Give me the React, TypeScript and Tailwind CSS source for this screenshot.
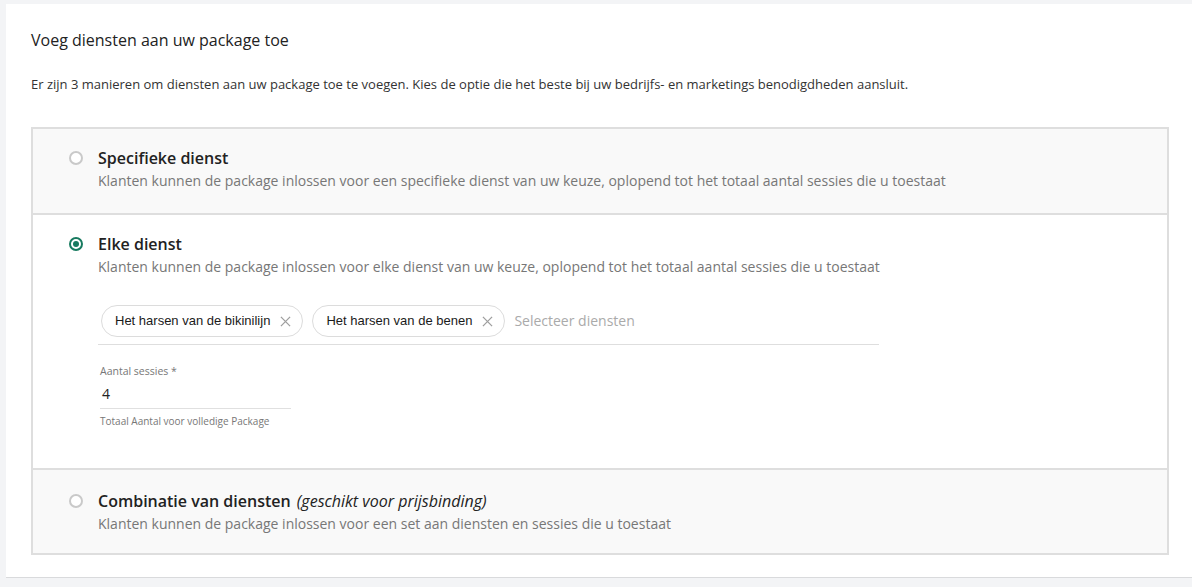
import React from "react";

const font = { fontFamily: '"Open Sans", "Noto Sans", sans-serif' };

function Radio({ checked }: { checked?: boolean }) {
  if (checked) {
    return (
      <span className="flex h-[14px] w-[14px] items-center justify-center rounded-full border-2 border-[#177a5f]">
        <span className="h-[6px] w-[6px] rounded-full bg-[#177a5f]" />
      </span>
    );
  }
  return <span className="block h-[14px] w-[14px] rounded-full border-2 border-[#c9c9c9] bg-white" />;
}

function XIcon() {
  return (
    <svg width="11" height="11" viewBox="0 0 12 12" className="ml-[10px]">
      <path d="M1 1 L11 11 M11 1 L1 11" stroke="#9e9e9e" strokeWidth="1.4" fill="none" />
    </svg>
  );
}

function Chip({ label }: { label: string }) {
  return (
    <div className="flex h-[32px] items-center rounded-full border border-[#dcdcdc] bg-white pl-[13px] pr-[11px]">
      <span className="text-[13px] text-[#1a1a1a]" style={{ fontFamily: '"Liberation Sans", Arial, sans-serif' }}>
        {label}
      </span>
      <XIcon />
    </div>
  );
}

export default function App() {
  return (
    <div className="min-h-[587px] w-[1192px] bg-[#f3f4f6] pl-[6px] pt-[4px]" style={font}>
      <div className="h-[574px] w-full border-b border-[#d9dadc] bg-white pl-[25px] pr-[23px] pt-[25px]">
        <h2 className="text-[16px] leading-[22px] text-[#222]">Voeg diensten aan uw package toe</h2>
        <p className="mt-[24px] text-[13px] leading-[18px] text-[#333]">
          Er zijn 3 manieren om diensten aan uw package toe te voegen. Kies de optie die het beste bij uw bedrijfs- en marketings benodigdheden aansluit.
        </p>
        <div className="mt-[34px] flex flex-col">
          {/* Option 1 */}
          <div className="flex h-[86px] border-l-2 border-r-2 border-t-2 border-[#dedede] bg-[#f9f9f9] pl-[36px] pt-[18px]">
            <div className="pt-[4px]">
              <Radio />
            </div>
            <div className="ml-[15px]">
              <div className="text-[16px] font-semibold leading-[22px] text-[#222]">Specifieke dienst</div>
              <div className="mt-[2px] text-[14px] leading-[20px] text-[#777]">
                Klanten kunnen de package inlossen voor een specifieke dienst van uw keuze, oplopend tot het totaal aantal sessies die u toestaat
              </div>
            </div>
          </div>
          {/* Option 2 */}
          <div className="flex h-[257px] border-2 border-[#dedede] bg-white pl-[36px] pt-[18px]">
            <div className="pt-[4px]">
              <Radio checked />
            </div>
            <div className="ml-[15px] flex flex-col">
              <div className="text-[16px] font-semibold leading-[22px] text-[#222]">Elke dienst</div>
              <div className="mt-[2px] text-[14px] leading-[20px] text-[#777]">
                Klanten kunnen de package inlossen voor elke dienst van uw keuze, oplopend tot het totaal aantal sessies die u toestaat
              </div>
              <div className="mt-[28px] flex h-[40px] w-[781px] items-start gap-[9px] border-b border-[#dedede] pl-[3px]">
                <Chip label="Het harsen van de bikinilijn" />
                <Chip label="Het harsen van de benen" />
                <span className="mt-[6px] text-[14px] leading-[20px] text-[#aaa]">Selecteer diensten</span>
              </div>
              <div className="ml-[2px] mt-[19px] w-[191px]">
                <div className="text-[10.5px] leading-[14px] text-[#777]">Aantal sessies *</div>
                <div className="mt-[6px] h-[25px] border-b border-[#e0e0e0] pl-[2px] text-[14px] leading-[20px] text-[#222]">4</div>
                <div className="mt-[6px] whitespace-nowrap text-[10px] leading-[12px] text-[#777]">
                  Totaal Aantal voor volledige Package
                </div>
              </div>
            </div>
          </div>
          {/* Option 3 */}
          <div className="flex h-[85px] border-b-2 border-l-2 border-r-2 border-[#dedede] bg-[#f9f9f9] pl-[36px] pt-[20px]">
            <div className="pt-[4px]">
              <Radio />
            </div>
            <div className="ml-[15px]">
              <div className="text-[16px] font-semibold leading-[22px] text-[#222]">
                Combinatie van diensten <span className="ml-[2px] font-normal italic">(geschikt voor prijsbinding)</span>
              </div>
              <div className="mt-[2px] text-[14px] leading-[20px] text-[#777]">
                Klanten kunnen de package inlossen voor een set aan diensten en sessies die u toestaat
              </div>
            </div>
          </div>
        </div>
      </div>
    </div>
  );
}
